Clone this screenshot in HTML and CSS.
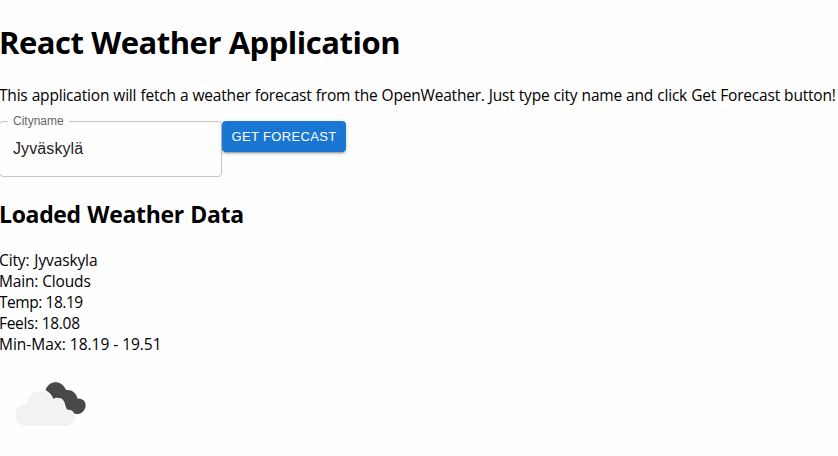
FILE: index.html
```html
<!DOCTYPE html>
<html lang="en">
<head>
<meta charset="utf-8">
<title>React Weather Application</title>
<link rel="stylesheet" href="styles.css">
</head>
<body>
<main class="app">
<h1 class="title">React Weather Application</h1>
<p class="intro">This application will fetch a weather forecast from the OpenWeather. Just type city name and click Get Forecast button!</p>
<form class="search">
<fieldset class="field"><legend class="field-label">Cityname</legend><span class="field-value">Jyväskylä</span></fieldset>
<button class="submit" type="button">Get Forecast</button>
</form>
<h2 class="subtitle">Loaded Weather Data</h2>
<div class="data">
<div class="city">City: Jyvaskyla</div>
<div class="main">Main: Clouds</div>
<div class="temp">Temp: 18.19</div>
<div class="feels">Feels: 18.08</div>
<div class="range">Min-Max: 18.19 - 19.51</div>
</div>
<svg class="icon" viewBox="0 0 100 100" width="100" height="100">
<path d="M45.500 35C49 24.500 62 24.500 66 35Q75 34 77.500 43.500C83 43 86.500 47 85.500 52C83 61 73 60.500 70 55.500Q66 55 65.500 51C64 43 57 41 53.500 44Q51 38 45.500 35Z" fill="#484848"/>
<path d="M25.500 71a11 11 0 0 1 1.500-22C28 36 43 31 50.500 42Q52 44 53 46C59 40 65 44 65 51Q65.500 54 67 55C72 54 75 58 75 61.500C75 67 71 71 65 71Z" fill="#f2f2f2"/>
</svg>
</main>
</body>
</html>
```
FILE: styles.css
```css
body { margin: 0; background: #fefefe; color: #000; font: 15.5px/21px "Open Sans", "Noto Sans", sans-serif; overflow: hidden; }
.app { padding-top: 21px; white-space: nowrap; }
.title { margin: 0 0 0 -1px; font-size: 31px; line-height: 43px; letter-spacing: -.47px; }
.intro { margin: 21px 0 0 -1px; letter-spacing: -.2px; word-spacing: .32px; }
.search { display: flex; align-items: flex-start; margin-top: 8px; height: 63px; font-family: "Liberation Sans", sans-serif; font-size: 16px; }
.field { box-sizing: border-box; width: 223px; height: 63px; margin: 0 0 0 -1px; padding: 0 13px; border: 1px solid #c4c4c4; border-radius: 4px; }
.field-label { margin-left: -5px; padding: 0 5px; font-size: 12px; line-height: 14px; color: #666; }
.field-value { display: block; line-height: 23px; margin-top: 9px; color: #222; letter-spacing: .1px; }
.submit { width: 124px; height: 31px; margin-top: 7px; padding: 0; border: 0; border-radius: 4px; background: #1976d2; color: #fff; font: 13px/23px "Liberation Sans", sans-serif; text-transform: uppercase; letter-spacing: .34px; box-shadow: 0 3px 1px -2px #0003, 0 2px 2px #0002, 0 1px 5px #0002; }
.subtitle { margin: 21px 0 0 -1px; font-size: 23px; line-height: 32px; letter-spacing: -.33px; word-spacing: .8px; }
.data { margin: 20px 0 0 -1px; }
.city { letter-spacing: -.12px; word-spacing: 1px; }
.range { letter-spacing: -.03px; }
.main { letter-spacing: -.15px; }
.temp { letter-spacing: -.45px; }
.feels { letter-spacing: -.3px; }
.icon { display: block; margin-left: -.5px; }
```
